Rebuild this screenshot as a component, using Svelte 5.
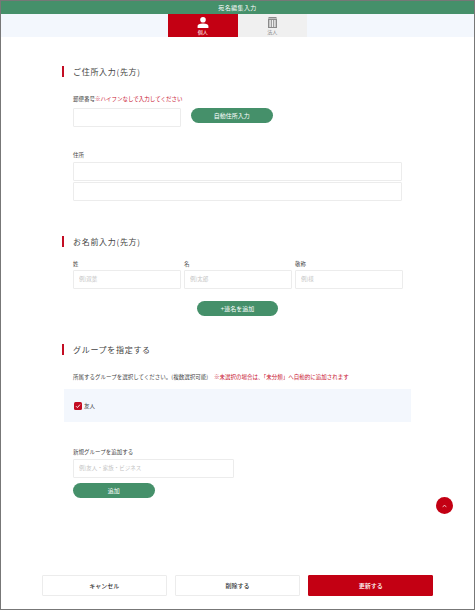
<script>
    const names = [
        { label: '姓', placeholder: '例)双葉' },
        { label: '名', placeholder: '例)太郎' },
        { label: '敬称', placeholder: '例)様' }
    ];
</script>

<div class="page">
    <header class="title">宛名編集入力</header>

    <nav class="tab-band">
        <button class="tab active">
            <svg viewBox="0 0 12 11" width="12" height="11" aria-hidden="true">
                <circle cx="6" cy="2.8" r="2.8" fill="#fff" />
                <path d="M0.6 11V9C0.6 7.2 2.4 6.4 6 6.4S11.4 7.2 11.4 9V11Z" fill="#fff" />
            </svg>
            <span>個人</span>
        </button>
        <button class="tab">
            <svg viewBox="0 0 9 11" width="9" height="11" aria-hidden="true">
                <path fill="#8a8a8a" d="M0.5 0H8.5V1H0.5ZM0 1.5H9V11H0ZM1.4 3V10H2.8V3ZM3.8 3V10H5.2V3ZM6.2 3V10H7.6V3Z" fill-rule="evenodd" />
            </svg>
            <span>法人</span>
        </button>
    </nav>

    <main class="content">
        <section class="addr">
            <h2>ご住所入力(先方)</h2>
            <label class="lbl zip-lbl" for="zip">郵便番号<em>※ハイフンなしで入力してください</em></label>
            <div class="zip-row">
                <input id="zip" class="zip" type="text" />
                <button class="pill">自動住所入力</button>
            </div>
            <label class="lbl addr-lbl" for="addr1">住所</label>
            <input id="addr1" class="wide" type="text" />
            <input class="wide second" type="text" />
        </section>

        <section class="name">
            <h2>お名前入力(先方)</h2>
            <div class="name-grid">
                {#each names as n}
                    <div class="name-col">
                        <span class="lbl">{n.label}</span>
                        <input type="text" placeholder={n.placeholder} />
                    </div>
                {/each}
            </div>
            <div class="center">
                <button class="pill">+連名を追加</button>
            </div>
        </section>

        <section class="group">
            <h2>グループを指定する</h2>
            <p class="lbl note">所属するグループを選択してください。(複数選択可能)<em>※未選択の場合は、「未分類」へ自動的に追加されます</em></p>
            <div class="group-band">
                <span class="check">
                    <svg viewBox="0 0 8 8" width="8" height="8" aria-hidden="true">
                        <path d="M2 4.2L3.4 5.6L6 2.6" fill="none" stroke="#fff" stroke-width="0.9" />
                    </svg>
                </span>
                <span class="lbl">友人</span>
            </div>
            <label class="lbl new-lbl" for="newgroup">新規グループを追加する</label>
            <input id="newgroup" class="new-input" type="text" placeholder="例)友人・家族・ビジネス" />
            <button class="pill add">追加</button>
        </section>
    </main>

    <button class="to-top" aria-label="ページ上部へ">
        <svg viewBox="0 0 6 4" width="5" height="4" aria-hidden="true">
            <path d="M0.8 3.4L3 0.8L5.2 3.4" fill="none" stroke="#fff" stroke-width="0.8" />
        </svg>
    </button>

    <footer class="actions">
        <button class="act">キャンセル</button>
        <button class="act">削除する</button>
        <button class="act primary">更新する</button>
    </footer>
</div>

<style>
    :global(body) {
        margin: 0;
        background: #fff;
    }

    .page {
        position: relative;
        box-sizing: border-box;
        width: 475px;
        height: 610px;
        border: 1px solid #777;
        font-family: "Noto Sans CJK JP", "Noto Sans", sans-serif;
        color: #333;
        display: flex;
        flex-direction: column;
        background: #fff;
        overflow: hidden;
    }

    .title {
        height: 13px;
        line-height: 13px;
        background: #45906a;
        color: #fff;
        text-align: center;
        font-size: 6px;
        letter-spacing: 0.4px;
    }

    .tab-band {
        height: 23px;
        background: #f3f7fd;
        display: flex;
        justify-content: center;
    }

    .tab {
        width: 69.5px;
        padding: 3px 0 0;
        border: none;
        background: #f0f0f0;
        color: #888;
        font-family: inherit;
        font-size: 5px;
        line-height: 6px;
        display: flex;
        flex-direction: column;
        align-items: center;
    }

    .tab span {
        margin-top: 1px;
    }

    .tab.active {
        background: #c30013;
        color: #fff;
    }

    .content {
        padding: 0 72px 0 61px;
        flex: 1;
    }

    h2 {
        margin: 0;
        border-left: 2px solid #c30d23;
        padding-left: 9px;
        height: 11px;
        line-height: 11px;
        font-size: 8px;
        font-weight: 400;
        letter-spacing: 0.7px;
        color: #444;
    }

    .lbl {
        font-size: 5.5px;
        line-height: 8px;
        color: #444;
    }

    em {
        font-style: normal;
        color: #c8102e;
    }

    input {
        box-sizing: border-box;
        height: 18.5px;
        border: 1px solid #ececec;
        border-radius: 1px;
        background: #fff;
        padding: 0 5px;
        margin: 0;
        font-family: inherit;
        font-size: 5.5px;
        outline: none;
    }

    input::placeholder {
        color: #c4c4c4;
    }

    .pill {
        width: 81.5px;
        height: 15px;
        border: none;
        border-radius: 8px;
        background: #45906a;
        color: #fff;
        font-family: inherit;
        font-size: 6px;
        padding: 0;
    }

    .addr {
        padding-top: 29px;
    }

    .addr .lbl,
    .addr input,
    .zip-row {
        margin-left: 11px;
    }

    .zip-lbl {
        display: block;
        margin-top: 18px;
    }

    .zip-row {
        display: flex;
        align-items: flex-start;
        gap: 10px;
        margin-top: 5px;
    }

    .zip-row .zip {
        width: 108px;
        margin-left: 0;
    }

    .addr-lbl {
        display: block;
        margin-top: 24.5px;
    }

    .wide {
        display: block;
        width: 329px;
        margin-top: 3px;
    }

    .wide.second {
        margin-top: 1.5px;
    }

    .name {
        padding-top: 35px;
    }

    .name-grid {
        display: grid;
        grid-template-columns: 108px 108px 108px;
        column-gap: 3px;
        margin: 13px 0 0 11px;
        width: 330px;
    }

    .name-col {
        display: flex;
        flex-direction: column;
        gap: 2.5px;
    }

    .name-col input {
        width: 100%;
    }

    .center {
        display: flex;
        justify-content: center;
        margin: 12.5px 0 0 0;
        width: 351px;
    }

    .group {
        padding-top: 28px;
    }

    .note {
        margin: 18px 0 0 11px;
        white-space: nowrap;
    }

    .note em {
        margin-left: 6px;
    }

    .group-band {
        display: flex;
        align-items: center;
        gap: 2px;
        box-sizing: border-box;
        height: 33px;
        width: 347px;
        margin: 8px 0 0 2px;
        padding-left: 10px;
        background: #f3f7fd;
    }

    .check {
        width: 8px;
        height: 8px;
        border-radius: 1.5px;
        background: #c30d23;
        display: flex;
    }

    .new-lbl {
        display: block;
        margin: 26px 0 0 11px;
    }

    .new-input {
        display: block;
        width: 161px;
        margin: 3px 0 0 11px;
    }

    .add {
        display: block;
        margin: 5.5px 0 0 11px;
    }

    .to-top {
        position: absolute;
        left: 435px;
        top: 496px;
        width: 17px;
        height: 17px;
        border: none;
        border-radius: 50%;
        padding: 0;
        background: #c30013;
        display: flex;
        align-items: center;
        justify-content: center;
    }

    .actions {
        display: flex;
        gap: 8.5px;
        padding: 0 41px 13px;
    }

    .act {
        flex: 1;
        height: 21px;
        padding: 0;
        border: 1px solid #ececec;
        border-radius: 1px;
        background: #fff;
        color: #333;
        font-family: inherit;
        font-size: 6px;
        font-weight: 500;
    }

    .act.primary {
        background: #c30013;
        border-color: #c30013;
        color: #fff;
    }
</style>
